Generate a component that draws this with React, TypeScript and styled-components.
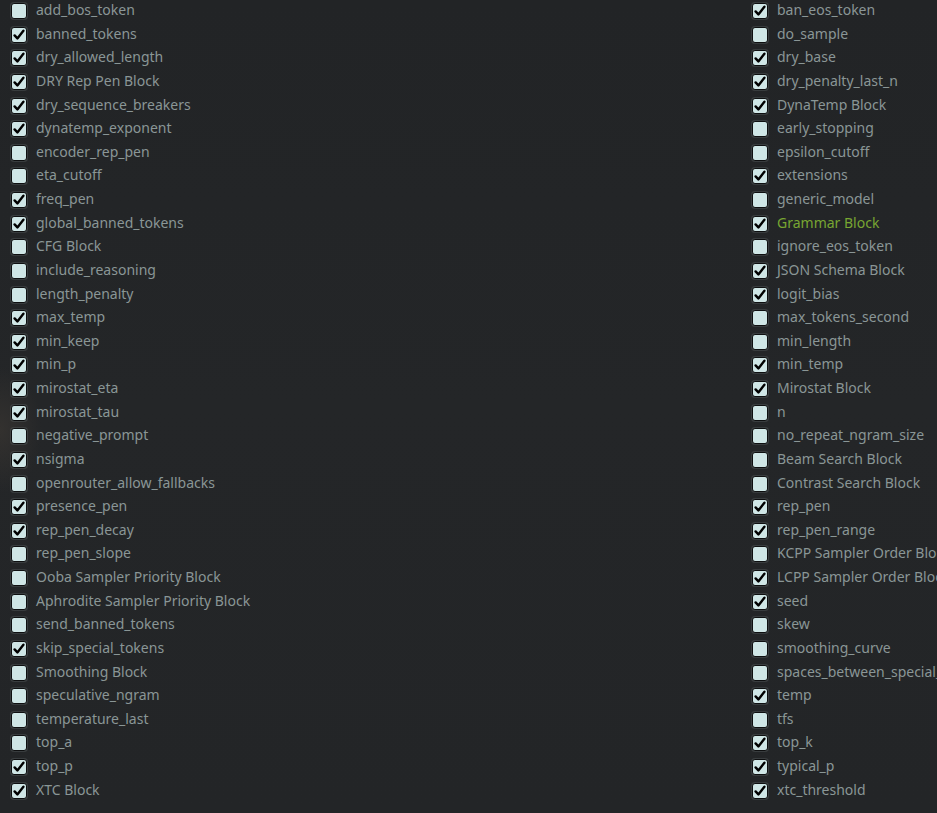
import React from "react";
import styled, { createGlobalStyle } from "styled-components";

const Global = createGlobalStyle`
  html, body { margin: 0; padding: 0; background: #232527; overflow: hidden; }
  body { font-family: "Noto Sans", "Open Sans", sans-serif; }
`;

const Page = styled.div`
  width: 937px;
  height: 813px;
  overflow: hidden;
  box-sizing: border-box;
  padding: 0 0 0 11px;
  background:
    radial-gradient(ellipse 60px 90px at 0px 430px, rgba(80, 70, 60, 0.35), transparent 70%),
    linear-gradient(180deg, #222426 0%, #242628 50%, #232527 100%);
`;

const Grid = styled.div`
  display: grid;
  grid-template-columns: 741px 400px;
  grid-auto-rows: 23.636px;
`;

const Row = styled.label`
  display: flex;
  align-items: flex-start;
  gap: 9px;
  white-space: nowrap;
  height: 23.636px;
`;

const Box = styled.span`
  flex: none;
  width: 14px;
  height: 14px;
  margin-top: 3px;
  border: 1px solid #0e0f10;
  border-radius: 3px;
  background: #cfe6e6;
  box-shadow: 0 0 0 1px rgba(120, 130, 130, 0.25);
  display: flex;
  align-items: center;
  justify-content: center;
`;

const Label = styled.span<{ $green?: boolean }>`
  font-size: 14px;
  line-height: 20px;
  color: ${(p) => (p.$green ? "#78a632" : "#8a9696")};
`;

type Item = [string, boolean, boolean?];

const items: Item[] = [
  ["add_bos_token", false], ["ban_eos_token", true],
  ["banned_tokens", true], ["do_sample", false],
  ["dry_allowed_length", true], ["dry_base", true],
  ["DRY Rep Pen Block", true], ["dry_penalty_last_n", true],
  ["dry_sequence_breakers", true], ["DynaTemp Block", true],
  ["dynatemp_exponent", true], ["early_stopping", false],
  ["encoder_rep_pen", false], ["epsilon_cutoff", false],
  ["eta_cutoff", false], ["extensions", true],
  ["freq_pen", true], ["generic_model", false],
  ["global_banned_tokens", true], ["Grammar Block", true, true],
  ["CFG Block", false], ["ignore_eos_token", false],
  ["include_reasoning", false], ["JSON Schema Block", true],
  ["length_penalty", false], ["logit_bias", true],
  ["max_temp", true], ["max_tokens_second", false],
  ["min_keep", true], ["min_length", false],
  ["min_p", true], ["min_temp", true],
  ["mirostat_eta", true], ["Mirostat Block", true],
  ["mirostat_tau", true], ["n", false],
  ["negative_prompt", false], ["no_repeat_ngram_size", false],
  ["nsigma", true], ["Beam Search Block", false],
  ["openrouter_allow_fallbacks", false], ["Contrast Search Block", false],
  ["presence_pen", true], ["rep_pen", true],
  ["rep_pen_decay", true], ["rep_pen_range", true],
  ["rep_pen_slope", false], ["KCPP Sampler Order Block", false],
  ["Ooba Sampler Priority Block", false], ["LCPP Sampler Order Block", true],
  ["Aphrodite Sampler Priority Block", false], ["seed", true],
  ["send_banned_tokens", false], ["skew", false],
  ["skip_special_tokens", true], ["smoothing_curve", false],
  ["Smoothing Block", false], ["spaces_between_special_tokens", false],
  ["speculative_ngram", false], ["temp", true],
  ["temperature_last", false], ["tfs", false],
  ["top_a", false], ["top_k", true],
  ["top_p", true], ["typical_p", true],
  ["XTC Block", true], ["xtc_threshold", true],
];

const Check = () => (
  <svg width="12" height="12" viewBox="0 0 12 12">
    <path d="M1.6 6.4 L4.4 9.4 L10.4 1.8" fill="none" stroke="#000" strokeWidth="2.4" strokeLinecap="round" strokeLinejoin="round" />
  </svg>
);

export default function App() {
  return (
    <>
      <Global />
      <Page>
        <Grid>
          {items.map(([name, checked, green]) => (
            <Row key={name}>
              <Box>{checked && <Check />}</Box>
              <Label $green={!!green}>{name}</Label>
            </Row>
          ))}
        </Grid>
      </Page>
    </>
  );
}
